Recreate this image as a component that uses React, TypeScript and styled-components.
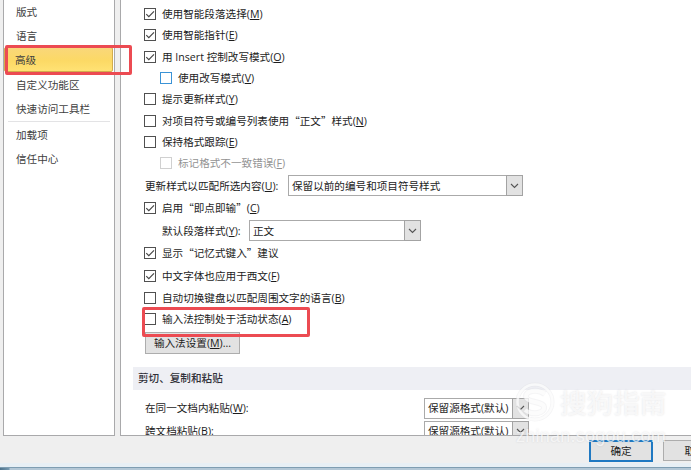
import React from "react";
import styled, { createGlobalStyle } from "styled-components";

const Global = createGlobalStyle`
  * { box-sizing: border-box; }
  body { margin: 0; overflow: hidden; }
`;

const Dialog = styled.div`
  position: relative;
  width: 691px;
  height: 470px;
  overflow: hidden;
  background: #efefef;
  color: #1c1c1c;
  font: 10.6px/16px "Open Sans", "Noto Sans CJK SC", sans-serif;
  white-space: nowrap;
  display: flex;
  flex-direction: column;
`;

const Body = styled.div`
  display: flex;
  gap: 5px;
  height: 436px;
  padding-left: 3px;
`;

const Sidebar = styled.nav`
  width: 112px;
  height: 436px;
  background: #fff;
  border: solid #a9a9ab;
  border-width: 0 1px 1px;
`;

const NavItem = styled.div<{ $h: number; $active?: boolean }>`
  position: relative;
  display: flex;
  align-items: center;
  height: ${(p) => p.$h}px;
  padding-left: ${(p) => (p.$active ? 10 : 12)}px;
  color: #404040;
  ${(p) =>
    p.$active &&
    `margin: 0 1px 0 0; border: 1px solid #d3ad4c; border-radius: 2px;
     background: linear-gradient(#f9d77a, #fcd965 55%, #ffe274);`}
`;

const Divider = styled.div`
  height: 1px;
  margin: 0 4px 0 4px;
  background: #e3e3e5;
`;

const Outline = styled.div<{ $x: number; $y: number; $w: number; $h: number }>`
  position: absolute;
  z-index: 2;
  left: ${(p) => p.$x}px;
  top: ${(p) => p.$y}px;
  width: ${(p) => p.$w}px;
  height: ${(p) => p.$h}px;
  border: 3px solid #ec4b52;
  border-radius: 2px;
  pointer-events: none;
`;

const Main = styled.main`
  flex: 1;
  height: 436px;
  overflow: hidden;
  background: #fff;
  border: solid #a9a9ab;
  border-width: 0 0 1px 1px;
  padding-top: 3px;
`;

const Row = styled.div<{ $h: number; $indent?: number; $muted?: boolean }>`
  position: relative;
  display: flex;
  align-items: center;
  height: ${(p) => p.$h}px;
  padding-left: ${(p) => p.$indent ?? 24}px;
  color: ${(p) => (p.$muted ? "#929292" : "inherit")};
`;

const Box = styled.span<{ $tone?: "blue" | "muted" }>`
  flex: none;
  width: 12px;
  height: 12px;
  margin: 0 6px 0 -1px;
  background: #fff;
  border: 1px solid
    ${(p) => (p.$tone === "blue" ? "#3b93d6" : p.$tone === "muted" ? "#d0d0d0" : "#505050")};
  svg { display: block; }
`;

const Key = styled.span`
  text-decoration: underline;
  text-decoration-thickness: 1px;
  text-underline-offset: 1px;
`;

const Quote = styled.span`
  font-family: "Noto Sans CJK SC", sans-serif;
`;

const Label = styled.span<{ $w?: number }>`
  flex: none;
  width: ${(p) => (p.$w ? `${p.$w}px` : "auto")};
`;

const Select = styled.div<{ $w: number }>`
  flex: none;
  display: flex;
  align-items: center;
  justify-content: space-between;
  width: ${(p) => p.$w}px;
  height: 21px;
  padding-left: 3px;
  background: #fff;
  border: 1px solid #aaa;
`;

const Arrow = styled.span`
  align-self: stretch;
  width: 17px;
  margin: -1px;
  display: flex;
  align-items: center;
  justify-content: center;
  background: #e2e2e2;
  border: 1px solid #a3a3a3;
`;

const Button = styled.button<{ $w: number; $h: number; $primary?: boolean }>`
  flex: none;
  width: ${(p) => p.$w}px;
  height: ${(p) => p.$h}px;
  padding: 0;
  font: inherit;
  color: inherit;
  background: #e2e2e2;
  border: ${(p) => (p.$primary ? "2px solid #2079c2" : "1px solid #adadad")};
`;

const Section = styled.h2`
  display: flex;
  align-items: center;
  height: 23px;
  margin: 12px 0 8px 12px;
  padding: 0 0 2px 5px;
  font: inherit;
  font-weight: 500;
  color: #303038;
  background: #eeeff4;
`;

const Footer = styled.footer`
  display: flex;
  align-items: center;
  gap: 10px;
  height: 27px;
  padding: 2px 0 0 589px;
`;

const Frame = styled.div`
  height: 7px;
  background: linear-gradient(90deg, #4e738c, #7498b0 9px, #b3c7d6 10px);
  border-top: 4px solid #e7eff5;
  box-shadow: inset 0 1px #7e9db2;
`;

const Watermark = styled.div`
  position: absolute;
  z-index: 3;
  left: 515px;
  top: 381px;
  display: grid;
  grid-template-columns: 45px 108px;
  grid-template-rows: 42px 24px;
  align-items: center;
  color: rgba(255, 255, 255, 0.7);
  text-shadow: 0 0 2px rgba(90, 90, 100, 0.18);
  pointer-events: none;
`;

const MarkName = styled.span`
  font: 500 26.6px/40px "Noto Sans CJK SC", sans-serif;
`;

const MarkUrl = styled.span`
  grid-column: 1 / 3;
  padding: 2px 0 0 1px;
  font: 400 18px/22px "Liberation Sans", sans-serif;
  letter-spacing: 0.25px;
`;

const Chevron = () => (
  <Arrow>
    <svg width="9" height="6" viewBox="0 0 9 6" fill="none" stroke="#555" strokeWidth="1.1">
      <path d="M1 1l3.5 3.5L8 1" />
    </svg>
  </Arrow>
);

type CheckProps = {
  h: number;
  checked?: boolean;
  indent?: number;
  tone?: "blue" | "muted";
  hotkey?: string;
  children: React.ReactNode;
  overlay?: React.ReactNode;
};

const Hot = ({ k, end = "" }: { k: string; end?: string }) => (
  <>(<Key>{k}</Key>){end}</>
);

const Check = ({ h, checked, indent, tone, hotkey, children, overlay }: CheckProps) => (
  <Row $h={h} $indent={indent} $muted={tone === "muted"}>
    <Box $tone={tone}>
      {checked && (
        <svg width="10" height="10" viewBox="0 0 10 10" fill="none" stroke="#444" strokeWidth="1.15">
          <path d="M1.3 5.2l2.5 2.5L9 2.4" />
        </svg>
      )}
    </Box>
    <Label>
      {children}
      {hotkey && <Hot k={hotkey} />}
    </Label>
    {overlay}
  </Row>
);

export default function App() {
  return (
    <Dialog>
      <Global />
      <Body>
        <Sidebar>
          <NavItem $h={24}>版式</NavItem>
          <NavItem $h={23}>语言</NavItem>
          <NavItem $h={25} $active>
            高级
            <Outline $x={0} $y={-3} $w={127} $h={30} />
          </NavItem>
          <NavItem $h={25}>自定义功能区</NavItem>
          <NavItem $h={24}>快速访问工具栏</NavItem>
          <Divider />
          <NavItem $h={26}>加载项</NavItem>
          <NavItem $h={22}>信任中心</NavItem>
        </Sidebar>
        <Main>
          <Check h={21} checked hotkey="M">使用智能段落选择</Check>
          <Check h={22} checked hotkey="E">使用智能指针</Check>
          <Check h={22} checked hotkey="O">用 Insert 控制改写模式</Check>
          <Check h={20} indent={40} tone="blue" hotkey="V">使用改写模式</Check>
          <Check h={22} hotkey="Y">提示更新样式</Check>
          <Check h={21} hotkey="N">
            对项目符号或编号列表使用<Quote>“正文”</Quote>样式
          </Check>
          <Check h={21} hotkey="E">保持格式跟踪</Check>
          <Check h={21} indent={40} tone="muted" hotkey="F">标记格式不一致错误</Check>
          <Row $h={25}>
            <Label $w={143}>更新样式以匹配所选内容<Hot k="U" end=":" /></Label>
            <Select $w={235}>保留以前的编号和项目符号样式<Chevron /></Select>
          </Row>
          <Check h={20} checked hotkey="C">
            启用<Quote>“即点即输”</Quote>
          </Check>
          <Row $h={25} $indent={41}>
            <Label $w={87}>默认段落样式<Hot k="Y" end=":" /></Label>
            <Select $w={172}>正文<Chevron /></Select>
          </Row>
          <Check h={20} checked>
            显示<Quote>“记忆式键入”</Quote>建议
          </Check>
          <Check h={25} checked hotkey="F">中文字体也应用于西文</Check>
          <Check h={19} hotkey="B">自动切换键盘以匹配周围文字的语言</Check>
          <Check h={23} hotkey="A" overlay={<Outline $x={21} $y={0} $w={168} $h={30} />}>
            输入法控制处于活动状态
          </Check>
          <Row $h={25}>
            <Button $w={95} $h={22}>输入法设置<Hot k="M" end="..." /></Button>
          </Row>
          <Section>剪切、复制和粘贴</Section>
          <Row $h={20}>
            <Label $w={279}>在同一文档内粘贴<Hot k="W" end=":" /></Label>
            <Select $w={105}>保留源格式(默认)<Chevron /></Select>
          </Row>
          <Row $h={26}>
            <Label $w={279}>跨文档粘贴<Hot k="B" end=":" /></Label>
            <Select $w={105}>保留源格式(默认)<Chevron /></Select>
          </Row>
        </Main>
      </Body>
      <Footer>
        <Button $w={64} $h={22} $primary>确定</Button>
        <Button $w={64} $h={21}>取消</Button>
      </Footer>
      <Frame />
      <Watermark>
        <svg width="40" height="40" viewBox="0 0 40 40" fill="none" stroke="#fff" strokeOpacity=".7">
          <circle cx="20" cy="20" r="17.5" stroke="#d9d9dd" strokeOpacity=".3" strokeWidth="4" />
          <circle cx="20" cy="20" r="17.5" strokeWidth="2.5" />
          <path d="M30 12C22 6 10 9 11 15s17 4 18 10-11 9-19 3" stroke="#d9d9dd" strokeOpacity=".25" strokeWidth="6" />
          <path d="M30 12C22 6 10 9 11 15s17 4 18 10-11 9-19 3" strokeWidth="4" />
        </svg>
        <MarkName>搜狗指南</MarkName>
        <MarkUrl>zhinan.sogou.com</MarkUrl>
      </Watermark>
    </Dialog>
  );
}
